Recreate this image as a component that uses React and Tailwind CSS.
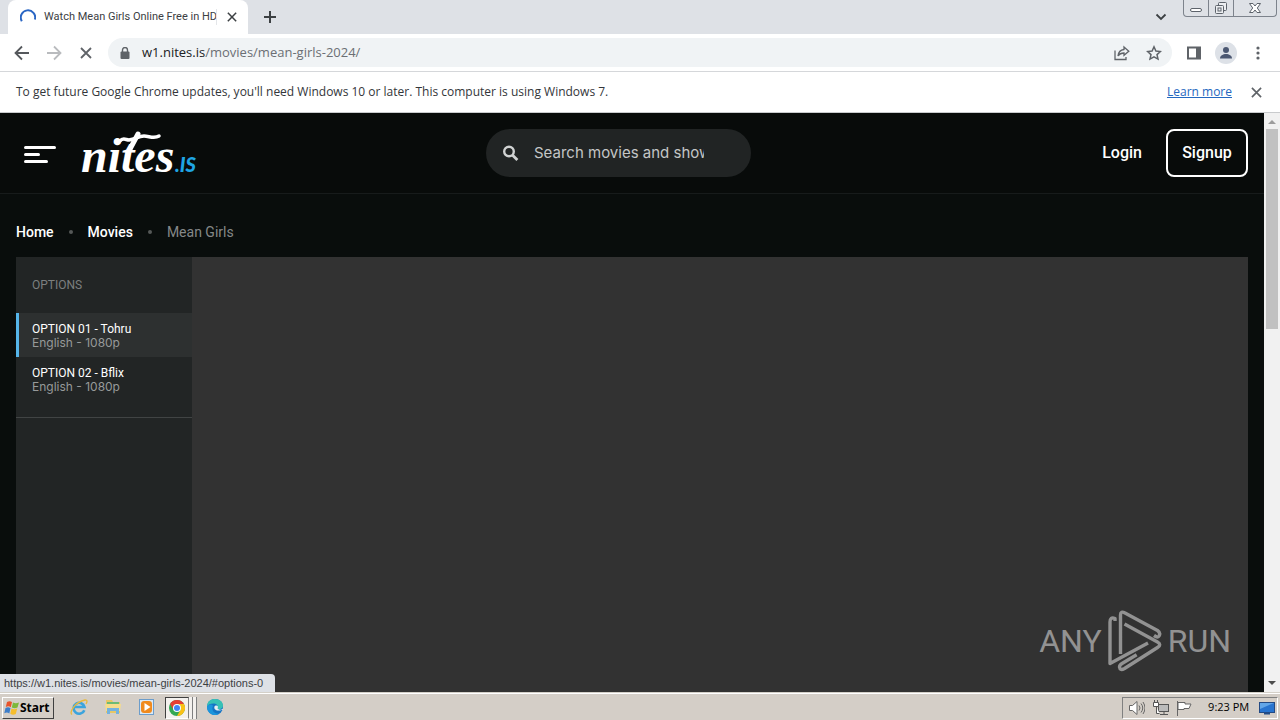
function Spinner() {
  return (
    <svg className="h-4 w-4 shrink-0" viewBox="0 0 16 16" fill="none" stroke="#2a66c4" strokeWidth="2">
      <path d="M1.800 12.200A7.200 7.200 0 1 1 14.900 10.500" />
    </svg>
  );
}

function Cross({ className }) {
  return (
    <svg className={className} viewBox="0 0 12 12" stroke="currentColor" strokeWidth="1.8" fill="none">
      <path d="M1 1l10 10M11 1L1 11" />
    </svg>
  );
}

function TabStrip() {
  return (
    <div className="flex h-[34px] items-start bg-[#dee1e6]">
      <div className="ml-2 flex h-[34px] w-60 items-center rounded-t-lg bg-white pl-3 pr-3">
        <Spinner />
        <span className="ml-2 w-[172px] shrink-0 whitespace-nowrap font-['Roboto',sans-serif] text-[11px] text-[#3c4043]">
          Watch Mean Girls Online Free in HD
        </span>
        <span className="h-4 w-px shrink-0 bg-[#e4e6e9]" />
        <button aria-label="Close tab" className="ml-2.5 shrink-0 text-[#3c4043]">
          <Cross className="h-2.5 w-2.5" />
        </button>
      </div>
      <button aria-label="New tab" className="ml-4 flex h-[34px] items-center text-[#3c4043]">
        <svg className="h-3 w-3" viewBox="0 0 12 12" stroke="currentColor" strokeWidth="2">
          <path d="M6 0v12M0 6h12" />
        </svg>
      </button>
      <button aria-label="Search tabs" className="ml-auto mr-4 flex h-[34px] items-center text-[#3c4043]">
        <svg className="h-3 w-3" viewBox="0 0 12 12" fill="none" stroke="currentColor" strokeWidth="1.8">
          <path d="M1.500 3.500L6 8l4.500-4.500" />
        </svg>
      </button>
      <div className="mr-[3px] flex h-[17px] divide-x divide-[#7d838c] rounded-b border border-t-0 border-[#7d838c] text-[#5d636b]">
        <button aria-label="Minimize" className="flex w-[25px] items-center justify-center">
          <svg className="h-4 w-4" viewBox="0 0 16 16" fill="#fff" stroke="currentColor">
            <rect x="2.500" y="8.500" width="11" height="3" rx="1.500" />
          </svg>
        </button>
        <button aria-label="Restore" className="flex w-[25px] items-center justify-center">
          <svg className="h-4 w-4" viewBox="0 0 16 16" fill="#eceef1" stroke="currentColor">
            <rect x="5.500" y="2.500" width="8" height="8" rx="1" />
            <rect x="2.500" y="5.500" width="8" height="8" rx="1" />
            <rect x="5" y="8" width="3" height="3" />
          </svg>
        </button>
        <button aria-label="Close" className="flex w-[42px] items-center justify-center">
          <svg className="h-4 w-4" viewBox="0 0 16 16" fill="#fff" stroke="currentColor">
            <path d="M2.500 3.500h3.500L8 6l2-2.500h3.500L10.300 8l3.200 4.500H10L8 10l-2 2.500H2.500L5.700 8z" />
          </svg>
        </button>
      </div>
    </div>
  );
}

function Toolbar() {
  return (
    <div className="flex h-[38px] items-center border-b border-[#d5d7da] bg-white pl-3.5 pr-3.5 text-[#5f6368]">
      <button aria-label="Back" className="text-[#55585c]">
        <svg className="h-4 w-4" viewBox="0 0 16 16" fill="none" stroke="currentColor" strokeWidth="1.800">
          <path d="M15 8H2M8 1.500L1.500 8 8 14.500" />
        </svg>
      </button>
      <button aria-label="Forward" className="ml-4 text-[#b9bbbe]">
        <svg className="h-4 w-4" viewBox="0 0 16 16" fill="none" stroke="currentColor" strokeWidth="1.800">
          <path d="M1 8h13M8 1.500L14.500 8 8 14.500" />
        </svg>
      </button>
      <button aria-label="Stop loading" className="ml-[18px]">
        <Cross className="h-3 w-3" />
      </button>
      <div className="ml-4 flex h-[29px] flex-1 items-center rounded-full bg-[#f0f3f5] pl-3 pr-2.5">
        <svg className="h-3 w-2.5 shrink-0" viewBox="0 0 10 12">
          <path d="M2.500 5V3a2.500 2.500 0 0 1 5 0v2" fill="none" stroke="#5f6368" strokeWidth="1.400" />
          <rect x="0.500" y="4.500" width="9" height="7.500" rx="1" fill="#5f6368" />
        </svg>
        <span className="ml-3 flex-1 font-['Open_Sans',sans-serif] text-[13px] text-[#6b6f74]">
          <span className="text-[#202124]">w1.nites.is</span>/movies/mean-girls-2024/
        </span>
        <button aria-label="Share">
          <svg className="h-4 w-4" viewBox="0 0 16 16" fill="none" stroke="currentColor" strokeWidth="1.300">
            <path d="M1 5.500V14.500h11V12M10 2l4.800 4.200L10 10.300V8C7 8 5.300 9 4 11c.4-3.500 2.500-6.200 6-6.500z" />
          </svg>
        </button>
        <button aria-label="Bookmark" className="ml-4">
          <svg className="h-4 w-4" viewBox="0 0 16 16" fill="none" stroke="currentColor" strokeWidth="1.500">
            <path d="M8 1.800l1.900 4.200 4.500.5-3.400 3.100 1 4.500L8 11.800l-4 2.300 1-4.500L1.600 6.500 6.100 6z" />
          </svg>
        </button>
      </div>
      <button aria-label="Side panel" className="ml-3.5">
        <svg className="h-4 w-4" viewBox="0 0 16 16">
          <path d="M1 1.500h14v13H1zM3 3.500v9h7v-9z" fill="currentColor" fillRule="evenodd" />
        </svg>
      </button>
      <button aria-label="Profile" className="ml-[13px]">
        <svg className="h-[22px] w-[22px]" viewBox="0 0 22 22">
          <circle cx="11" cy="11" r="11" fill="#dde1e7" />
          <circle cx="11" cy="8" r="3" fill="#4c5872" />
          <path d="M5 16.500c0-3 3-4.500 6-4.500s6 1.500 6 4.500z" fill="#4c5872" />
        </svg>
      </button>
      <button aria-label="Menu" className="ml-[13px]">
        <svg className="h-4 w-4" viewBox="0 0 16 16" fill="currentColor">
          <circle cx="8" cy="3" r="1.600" />
          <circle cx="8" cy="8" r="1.600" />
          <circle cx="8" cy="13" r="1.600" />
        </svg>
      </button>
    </div>
  );
}

function InfoBar() {
  return (
    <div className="flex h-[41px] items-center border-b border-[#c9cbcd] bg-white px-4 font-['Open_Sans',sans-serif] text-xs text-[#33363a]">
      <p>To get future Google Chrome updates, you'll need Windows 10 or later. This computer is using Windows 7.</p>
      <a href="#learn" className="ml-auto text-[#2468c0] underline">Learn more</a>
      <button aria-label="Dismiss" className="ml-[19px] mr-0.5 text-[#5f6368]">
        <Cross className="h-[11px] w-[11px]" />
      </button>
    </div>
  );
}

function Logo() {
  return (
    <a href="#home" aria-label="nites.is" className="ml-[25px]">
      <svg className="h-12 w-[118px] overflow-visible" viewBox="0 0 118 48">
        <text x="0" y="43" fill="#fff" fontFamily="Liberation Serif, serif" fontStyle="italic" fontWeight="700" fontSize="48">nites</text>
        <path d="M39 12c3-4 6-1 9-1 7-1 9-4 15-4 5 0 10 3 15 0" fill="none" stroke="#fff" strokeWidth="3.500" strokeLinecap="round" />
        <path d="M49 20L57 5" fill="none" stroke="#fff" strokeWidth="5" strokeLinecap="round" />
        <text x="94" y="43" fill="#1fa5e4" fontFamily="Lato, sans-serif" fontStyle="italic" fontWeight="900" fontSize="20">.IS</text>
      </svg>
    </a>
  );
}

function SiteHeader() {
  return (
    <header className="flex h-[81px] shrink-0 items-center border-b border-[#171b1b] bg-[#080b0a] pl-6 pr-4">
      <div className="flex flex-[462_1_0%] items-center">
        <button aria-label="Open menu" className="mt-0.5 flex w-8 flex-col gap-1">
          <span className="h-[3px] w-8 rounded-full bg-white" />
          <span className="h-[3px] w-4 rounded-full bg-white" />
          <span className="h-[3px] w-6 rounded-full bg-white" />
        </button>
        <Logo />
      </div>
      <label className="flex h-12 w-[265px] items-center rounded-full bg-[#212424] pl-4 text-[#d0d2d2]">
        <svg className="h-[17px] w-[17px] shrink-0" viewBox="0 0 17 17" fill="none" stroke="currentColor" strokeWidth="2.400">
          <circle cx="7" cy="6.500" r="4.800" />
          <path d="M10.400 9.900l5 5" strokeWidth="2.800" />
        </svg>
        <input
          type="text"
          aria-label="Search"
          placeholder="Search movies and shows"
          className="ml-[15px] w-[170px] bg-transparent text-[15px] outline-none placeholder:text-[#c4c6c6]"
        />
      </label>
      <div className="flex flex-[497_1_0%] items-center justify-end gap-6 font-['Roboto',sans-serif] text-base font-medium text-white">
        <a href="#login">Login</a>
        <button className="h-12 w-[82px] rounded-lg border-2 border-white">Signup</button>
      </div>
    </header>
  );
}

function Option({ title, detail, active }) {
  return (
    <button
      className={
        active
          ? "block h-11 w-full border-l-[3px] border-[#55b5ea] bg-[#2d3030] pl-[13px] pt-0.5 text-left"
          : "block h-11 w-full border-l-[3px] border-transparent pl-[13px] pt-0.5 text-left"
      }
    >
      <span className="block font-['Roboto',sans-serif] text-xs leading-[14px] text-white">{title}</span>
      <span className="block text-xs leading-[14px] text-[#979a9a]">{detail}</span>
    </button>
  );
}

function Watermark() {
  return (
    <div className="absolute right-[17px] bottom-5 flex items-center gap-1.5 font-['Roboto',sans-serif] text-[32px] leading-none text-[#929292]">
      <span>ANY</span>
      <svg className="h-[62px] w-[54px]" viewBox="0 0 54 62" fill="none" stroke="#929292" strokeWidth="3.400" strokeLinejoin="round">
        <path d="M7 11V8.500Q2 6.500 2 12V53.500L40 33" />
        <path d="M12.500 44V5Q12.500 0.500 17 3L49.500 20.500Q53 23 51 26Q49.500 28 46 25.500" />
        <path d="M16.500 14L49.500 32Q54 34.500 49.500 37.500L16.500 58.500Q12 61 11.500 57Q11.500 55 14 53.500L48 33" strokeDasharray="112 100" />
      </svg>
      <span>RUN</span>
    </div>
  );
}

function Page() {
  return (
    <main className="relative flex min-h-0 flex-1 bg-[#090d0c] font-['Inter',sans-serif]">
      <div className="flex min-w-0 flex-1 flex-col">
        <SiteHeader />
        <nav className="flex h-[63px] shrink-0 items-center px-4 pt-3 font-['Roboto',sans-serif] text-sm text-white">
          <a href="#home" className="font-medium">Home</a>
          <span className="mx-[15px] h-1 w-1 rounded-full bg-[#555858]" />
          <a href="#movies" className="font-medium">Movies</a>
          <span className="mx-[15px] h-1 w-1 rounded-full bg-[#555858]" />
          <span className="text-[#858888]">Mean Girls</span>
        </nav>
        <section className="mx-4 flex min-h-0 flex-1">
          <aside className="w-44 shrink-0 bg-[#222525]">
            <div className="border-b border-[#414444] pb-4">
              <h2 className="flex h-14 items-center pl-4 font-['Roboto',sans-serif] text-xs text-[#7c7f7f]">OPTIONS</h2>
              <Option title="OPTION 01 - Tohru" detail="English - 1080p" active />
              <Option title="OPTION 02 - Bflix" detail="English - 1080p" />
            </div>
          </aside>
          <div className="relative flex-1 bg-[#323232]">
            <Watermark />
          </div>
        </section>
      </div>
      <div className="flex w-4 shrink-0 flex-col items-center bg-[#f1f1f1]">
        <svg className="h-4 w-4" viewBox="0 0 16 16"><path d="M4 11l4-4 4 4z" fill="#9d9d9d" /></svg>
        <div className="h-[200px] w-3 bg-[#c1c1c1]" />
        <svg className="mt-auto h-4 w-4" viewBox="0 0 16 16"><path d="M4 5h8l-4 4z" fill="#4d4d4d" /></svg>
      </div>
      <div className="absolute bottom-0 left-0 flex h-[18px] w-[275px] items-center rounded-tr bg-[#dee1e6] pl-1 font-['Liberation_Sans',sans-serif] text-[11px] whitespace-nowrap text-[#3c4043]">
        https://w1.nites.is/movies/mean-girls-2024/#options-0
      </div>
    </main>
  );
}

function WindowsFlag() {
  return (
    <svg className="h-4 w-4" viewBox="0 0 16 16">
      <path d="M3 2c2-1.300 3.500-1 5 0L6.800 7.200c-1.500-1-3-1.200-5-.2z" fill="#e8532a" />
      <path d="M9 2.500c2 1 3.500 1 6 0L13.500 7.500c-2 1-3.800 1-5.700 0z" fill="#7db83a" />
      <path d="M1.500 8c2-1 3.500-.8 5 .2L5.300 13.400c-1.500-1-3-1-5-.2z" fill="#3c7dc9" />
      <path d="M7.500 8.600c2 1 3.500 1 5.700 0L11.800 14c-2 1-3.700.8-5.500-.200z" fill="#f5bd2c" />
    </svg>
  );
}

function Taskbar() {
  return (
    <footer className="flex h-7 shrink-0 items-center border-t border-[#d4d0c8] bg-[#d4cec7] shadow-[inset_0_1px_0_#fff]">
      <button className="ml-0.5 mt-0.5 flex h-[22px] w-[52px] items-center border border-t-white border-l-white border-r-[#404040] border-b-[#404040] pl-px font-['Noto_Sans',sans-serif] text-xs font-bold text-black">
        <WindowsFlag />
        Start
      </button>
      <button aria-label="Internet Explorer" className="ml-4">
        <svg className="h-[18px] w-[18px]" viewBox="0 0 18 18" fill="none">
          <path d="M14.300 12.200A5.500 5.500 0 1 1 14.500 9H5" stroke="#3ba4dd" strokeWidth="2.600" />
          <path d="M2 16.500C-1 14 5 4 15 2c3-.3 2 2.500 1 4" stroke="#e9b93c" strokeWidth="1.300" />
        </svg>
      </button>
      <button aria-label="Explorer" className="ml-4">
        <svg className="h-[18px] w-[18px]" viewBox="0 0 18 18">
          <path d="M2 2h6l1 2h7v11H2z" fill="#e7c765" />
          <path d="M3 4h12v3H3z" fill="#6dbb74" />
          <path d="M1 6h16l-1 7H2z" fill="#f5dd8c" />
          <path d="M3 16v-6h12v6h-3v-3H6v3z" fill="#74b2de" />
        </svg>
      </button>
      <button aria-label="Media Player" className="ml-4">
        <svg className="h-[18px] w-[18px]" viewBox="0 0 18 18">
          <rect x="1.500" y="1.500" width="14" height="15" fill="#dbe9f5" stroke="#6c9dcb" />
          <rect x="3" y="3" width="11" height="12" rx="3" fill="#f08a1d" />
          <path d="M6.500 5v8L12.500 9z" fill="#fff" />
        </svg>
      </button>
      <div className="ml-[9px] mt-0.5 flex h-[22px]">
        <button aria-label="Chrome" className="flex w-6 items-center justify-center border border-t-[#404040] border-l-[#404040] border-r-[#808080] border-b-white bg-[#f4f1ee]">
          <svg className="h-4 w-4" viewBox="0 0 16 16">
            <circle cx="8" cy="8" r="8" fill="#34a853" />
            <path d="M1.070 4A8 8 0 0 1 14.930 4H8a4 4 0 0 0-3.460 6z" fill="#e63f32" />
            <path d="M14.930 4A8 8 0 0 1 8 16l3.460-6A4 4 0 0 0 8 4z" fill="#fbc116" />
            <circle cx="8" cy="8" r="4" fill="#fff" />
            <circle cx="8" cy="8" r="3" fill="#4285f4" />
          </svg>
        </button>
        <span className="w-1 border-r border-[#808080] bg-[#f4f1ee]" />
        <span className="w-1 border-r border-[#808080] bg-[#f4f1ee]" />
      </div>
      <button aria-label="Edge" className="ml-[9px]">
        <svg className="h-[18px] w-[18px]" viewBox="0 0 18 18">
          <circle cx="9" cy="9" r="8" fill="#1474c4" />
          <path d="M1 9C1 3 5 1 9 1c5 0 8 3 8 6.500 0 3-2.500 4-5 3.700-1.500-.2-1-1-.5-2C12 7 10 5.500 7.500 5.500 4 5.500 1.500 7 1 9z" fill="#37c1b5" />
          <path d="M7 8c-2 4 1 8 6 7.700C9 19 1 16 1 9c1.500-3 5-3 6-1z" fill="#1b95dc" />
          <path d="M8.500 8.500c-1 3 2 5 7 3.500l1.500 0v-1c-2 1.500-4 .5-5 0-1-1 0-1 0-2.500-1-1.500-3-1-3.500 0z" fill="#e6eef2" />
        </svg>
      </button>
      <div className="ml-auto mr-0.5 mt-0.5 flex h-[22px] w-[156px] items-center justify-between border border-t-[#808080] border-l-[#808080] border-r-white border-b-white pl-1.5 pr-0.5 font-['Open_Sans',sans-serif] text-[11px] text-black">
        <svg className="h-4 w-4" viewBox="0 0 16 16" fill="#fff" stroke="#666">
          <path d="M.5 5.500h3L8 1.500v13l-4.500-4h-3z" />
          <path d="M10 5.500q2 2.500 0 5M12 3.500q3.500 4.500 0 9M14 2q4 6 0 12" fill="none" />
        </svg>
        <svg className="ml-1 h-4 w-4" viewBox="0 0 16 16" fill="#fff" stroke="#555">
          <rect x="5.500" y="4.500" width="10" height="7" fill="#bbb" />
          <path d="M.5 2.500h5v4h-5zM3.500 6.500v7h3M7 14.500h8M11 12v2M1.500 0v2M4.500 0v2" />
        </svg>
        <svg className="ml-1 h-4 w-4" viewBox="0 0 16 16" fill="#fff" stroke="#666">
          <path d="M1.500 1v15M2 2.500h7v1.500h6l-2 4.500H8V9.500H2z" />
        </svg>
        <span className="ml-3 whitespace-nowrap">9:23 PM</span>
        <svg className="ml-1.5 h-4 w-4" viewBox="0 0 16 16">
          <rect x="0.500" y="2.500" width="15" height="10" fill="#2874cf" stroke="#234a84" />
          <path d="M1 3h14L1 9z" fill="#62a6e8" />
          <path d="M5 13h6v1.500H5z" fill="#244d85" />
        </svg>
      </div>
    </footer>
  );
}

export default function App() {
  return (
    <div className="flex h-screen flex-col overflow-hidden">
      <TabStrip />
      <Toolbar />
      <InfoBar />
      <Page />
      <Taskbar />
    </div>
  );
}
